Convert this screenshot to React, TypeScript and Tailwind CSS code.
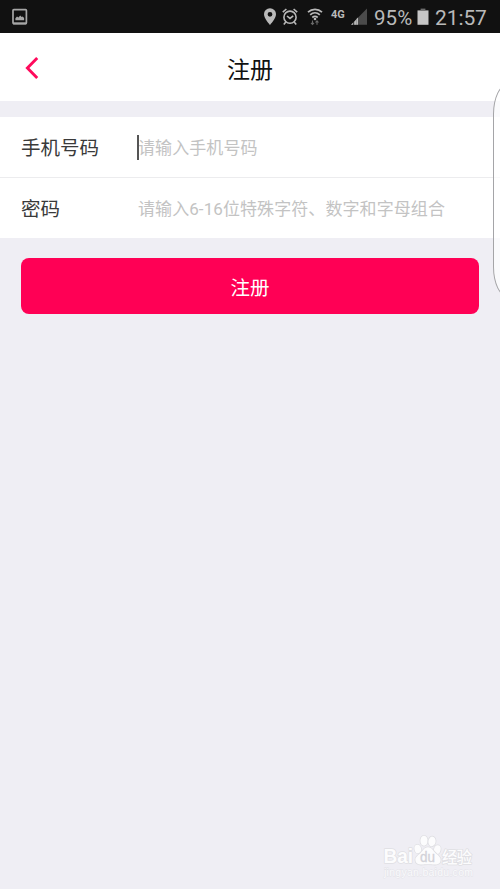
import { useState } from "react";

const fields = [
    { id: "phone", label: "手机号码", placeholder: "请输入手机号码", type: "tel", active: true },
    { id: "password", label: "密码", placeholder: "请输入6-16位特殊字符、数字和字母组合", type: "password", active: false },
];

function StatusBar() {
    return (
        <div className="flex h-[33px] shrink-0 items-center bg-[#111111] pt-px text-[#b9b9b9]">
            <svg className="ml-3 h-[18px] w-4" viewBox="0 0 16 18" fill="none">
                <rect x="1" y="1.6" width="13.4" height="14" rx="0.8" stroke="#a6a6a6" strokeWidth="1.7" />
                <path d="M1 15.4h13.4" stroke="#a6a6a6" strokeWidth="2" />
                <path d="M3.4 12.2v-2l1.6-1.6 1.4 1 1.8-2.2 1.5 1.5 1-.5 1.4 1.6v2.2z" fill="#a6a6a6" />
            </svg>

            <div className="flex-1" />

            {/* Location */}
            <svg className="h-[18px] w-3" viewBox="0 0 12 18">
                <path fillRule="evenodd" fill="#b9b9b9" d="M6 .2A6 6 0 0 0 0 6.3C0 10.4 6 17 6 17s6-6.6 6-10.7A6 6 0 0 0 6 .2zm0 3.7a2.4 2.4 0 1 1 0 4.8 2.4 2.4 0 0 1 0-4.8z" />
            </svg>

            {/* Alarm */}
            <svg className="ml-1.5 h-[18px] w-4" viewBox="0 0 16 18" fill="none" stroke="#b9b9b9" strokeWidth="1.6">
                <circle cx="8" cy="9.2" r="6.1" />
                <path d="M.8 4.2 4.4 1M15.2 4.2 11.6 1M3.8 14l-2 2.4M12.2 14l2 2.4M5 8l3 2.4L11.2 7.8" />
            </svg>

            {/* Wifi */}
            <svg className="ml-[9px] h-[18px] w-4" viewBox="0 0 16 18" fill="none">
                <path d="M1 4.2C5 .3 11 .3 15 4.2M3.2 6.9c2.8-2.6 6.8-2.6 9.6 0M5.3 9.5c1.6-1.4 3.8-1.4 5.4 0" stroke="#b9b9b9" strokeWidth="1.7" />
                <circle cx="8" cy="11" r="1.3" fill="#b9b9b9" />
                <path d="M5.5 16.5v-4M4 14.8l1.5 1.7L7 14.8M10 12.8v4M8.5 14.5l1.5-1.7 1.5 1.7" stroke="#6b6b6b" strokeWidth="1.1" />
            </svg>

            <span className="mb-[6px] ml-[8px] w-[15px] font-[Roboto] text-[11px] font-bold leading-none">4G</span>

            {/* Signal */}
            <svg className="ml-[5px] h-[18px] w-[18px]" viewBox="0 0 18 18">
                <path d="M16 .4v16.4H0z" fill="#4b4b4b" />
                <path d="M0 16.8h2v-2zM3.2 16.8h2.2v-5.5l-2.2 2.4z" fill="#b9b9b9" />
                <path d="M5.4 11.1v5.7h1.6v-7.2z" fill="#b9b9b9" />
            </svg>

            <span className="ml-[5px] w-[40px] whitespace-nowrap pt-0.5 font-[Roboto] text-[20.5px] leading-none tracking-[0.1px]">95%</span>
            <svg className="ml-[3px] h-[18px] w-3" viewBox="0 0 12 18">
                <path d="M.5 2.4h11v14.4H.5z" fill="#c6c6c6" />
                <path d="M3.6.6h4.8v1.8H3.6z" fill="#6d6d6d" />
            </svg>
            <span className="ml-[6px] mr-[13px] w-[52px] whitespace-nowrap pt-0.5 font-[Roboto] text-[21px] leading-none tracking-[-0.1px]">21:57</span>
        </div>
    );
}

function Watermark() {
    return (
        <svg className="absolute bottom-[8px] left-[382px] h-[48px] w-[94px]" viewBox="0 0 94 48">
            <g fill="#fcfcfd" stroke="#dfdfe3" strokeWidth="1.6" strokeLinejoin="round" paintOrder="stroke">
                <text x="1.5" y="30" fontSize="20.5" textLength="29.5" lengthAdjust="spacingAndGlyphs" fontWeight="700" fontFamily="Liberation Sans, sans-serif">Bai</text>
                <ellipse cx="35.8" cy="16" rx="3.3" ry="4.3" transform="rotate(-12 35.8 16)" />
                <ellipse cx="42" cy="7.8" rx="3.6" ry="5" />
                <ellipse cx="50" cy="8.4" rx="3.6" ry="4.8" transform="rotate(8 50 8.4)" />
                <ellipse cx="55.3" cy="16.6" rx="3.3" ry="4.4" transform="rotate(12 55.3 16.6)" />
                <path d="M46 14.2c-4 0-5.2 3.8-7.6 6-2.4 2.2-5.2 3.8-5 7 .2 3 2.9 4.6 5.9 4.4 2.4-.2 4.2-.4 6.7-.4s4.3.2 6.7.4c3 .2 5.7-1.4 5.9-4.4.2-3.2-2.6-4.8-5-7-2.4-2.2-3.6-6-7.6-6z" />
                <text x="60" y="29.5" fontSize="15.5" fontWeight="500" textLength="30" fontFamily="Noto Sans CJK SC, sans-serif">经验</text>
            </g>
            <text x="38" y="28.5" fontSize="14" textLength="15" lengthAdjust="spacingAndGlyphs" fill="#d2d2d8" stroke="#d2d2d8" strokeWidth="0.3" fontFamily="Liberation Sans, sans-serif">du</text>
            <text x="2" y="42.5" fontSize="10.5" textLength="89" fill="#fafafc" stroke="#e2e2e7" strokeWidth="0.8" paintOrder="stroke" fontFamily="Liberation Sans, sans-serif">jingyan.baidu.com</text>
        </svg>
    );
}

export default function App() {
    const [values, setValues] = useState<Record<string, string>>({});

    return (
        <div className="relative flex h-[889px] w-[500px] flex-col overflow-hidden bg-[#efeef4] font-['Roboto','Noto_Sans_CJK_SC',sans-serif]">
            <StatusBar />

            <header className="flex h-[68px] shrink-0 items-center bg-white">
                <button className="ml-6 w-4" aria-label="返回">
                    <svg className="h-6 w-4" viewBox="0 0 16 24" fill="none" stroke="#ff0a5c" strokeWidth="2.9">
                        <path d="M13.2 3 3.4 13l9.8 10" />
                    </svg>
                </button>
                <h1 className="flex-1 pr-10 pt-[7px] text-center text-[23px] leading-[34px] text-[#111111]">注册</h1>
            </header>

            <form className="mt-4 flex flex-col" onSubmit={(e) => e.preventDefault()}>
                {fields.map((field) => (
                    <div key={field.id} className="flex h-[61px] items-center border-b border-[#ececee] bg-white last-of-type:h-[60px] last-of-type:border-b-0">
                        <label htmlFor={field.id} className="w-[137px] pl-[21px] pt-1 text-[19.5px] leading-7 text-[#3a3a3a]">
                            {field.label}
                        </label>
                        <div className="relative flex h-[25px] flex-1 items-center">
                            {field.active && <span className="absolute left-0 h-[25px] w-[1.5px] bg-[#555555]" />}
                            <input
                                id={field.id}
                                type={field.type}
                                placeholder={field.placeholder}
                                value={values[field.id] ?? ""}
                                onChange={(e) => setValues({ ...values, [field.id]: e.target.value })}
                                className="w-[340px] pl-px pt-[3px] text-[17px] tracking-[0.08px] text-[#333333] outline-none placeholder:text-[#c3c3c3]"
                            />
                        </div>
                    </div>
                ))}

                <button type="submit" className="mx-[21px] mt-5 h-[56px] rounded-lg bg-[#ff0055] pt-1.5 text-[19.5px] text-white">
                    注册
                </button>
            </form>

            {/* Edge panel handle */}
            <div className="absolute left-[493px] top-[84px] h-[213px] w-[30px] rounded-[16px/32px] border border-[#a5a5a8] bg-white/70" />
            <Watermark />
        </div>
    );
}
